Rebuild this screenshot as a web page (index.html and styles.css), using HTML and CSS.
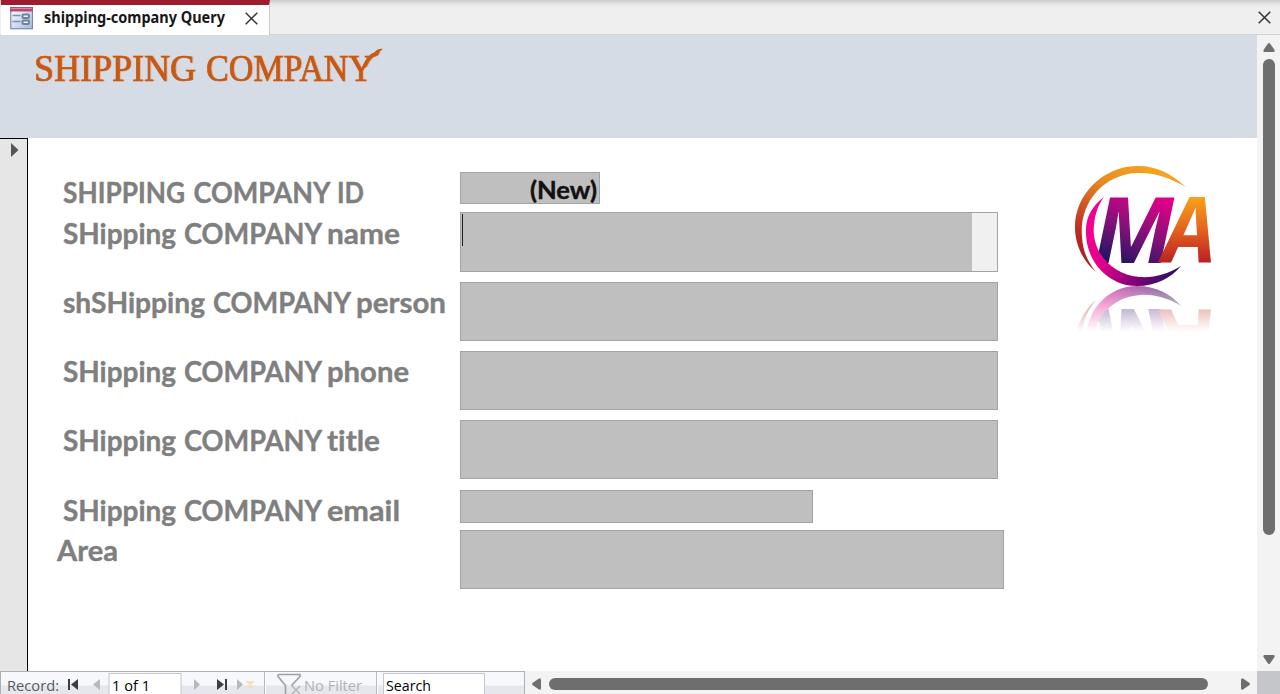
FILE: index.html
```html
<!DOCTYPE html>
<html lang="en">
<head>
<meta charset="utf-8">
<title>shipping-company Query</title>
<link rel="stylesheet" href="styles.css">
</head>
<body>
<div class="window">
  <header class="tabs">
    <div class="tab">
      <svg class="form-icon" width="24" height="23" viewBox="0 0 24 23">
        <defs><linearGradient id="fi" x1="0" y1="0" x2="1" y2="1"><stop offset="0" stop-color="#fff"/><stop offset="1" stop-color="#a5b9e2"/></linearGradient></defs>
        <rect x=".8" y=".8" width="21.600" height="21" fill="url(#fi)" stroke="#6779a8"/>
        <path d="M0 0h23v4.500H0z" fill="#b84a70"/><path d="M1 1.500h21" stroke="#d88aa3"/>
        <path d="M2.500 8.500h8M2.500 14.500h8" stroke="#8290b0" stroke-width="1.500"/>
        <rect x="12.500" y="7.500" width="6.500" height="3.500" rx="1" fill="#eef2fb" stroke="#71809f" stroke-width="2"/>
        <rect x="12.500" y="13.500" width="6.500" height="3.500" rx="1" fill="#eef2fb" stroke="#71809f" stroke-width="2"/>
      </svg>
      <svg class="tab-title" width="184" height="26"><text x="0" y="18" textLength="181" lengthAdjust="spacingAndGlyphs">shipping-company Query</text></svg>
      <svg class="close" width="13" height="13" viewBox="0 0 13 13"><path d="M.7.7l11.600 11.600M12.300.7L.7 12.300"/></svg>
    </div>
    <svg class="close window-close" width="13" height="13" viewBox="0 0 13 13"><path d="M.7.7l11.600 11.600M12.300.7L.7 12.300"/></svg>
  </header>
  <main class="workspace">
    <section class="form">
      <div class="form-header">
        <svg class="heading" width="370" height="70"><text y="46"><tspan x="1" textLength="162" lengthAdjust="spacingAndGlyphs">SHIPPING</tspan> <tspan x="173" textLength="167" lengthAdjust="spacingAndGlyphs">COMPANY</tspan></text><path d="M329 33Q335 19 341 18Q344 14 349 14Q346 16 345 20L340 22Q337 24 333 32z" fill="#c45a16"/></svg>
      </div>
      <div class="form-body">
        <div class="selector"><svg width="8" height="14"><path d="M0 0l7.500 7L0 14z" fill="#555"/></svg></div>
        <div class="fields">
          <div class="row short"><svg class="label" width="432" height="40"><text y="30"><tspan x="35" textLength="122" lengthAdjust="spacingAndGlyphs">SHIPPING</tspan> <tspan x="165.500" textLength="136" lengthAdjust="spacingAndGlyphs">COMPANY</tspan> <tspan x="309" textLength="27" lengthAdjust="spacingAndGlyphs">ID</tspan></text></svg><div class="box id"><svg width="70" height="30"><text x="1" y="26" textLength="67" lengthAdjust="spacingAndGlyphs">(New)</text></svg></div></div>
          <div class="row"><svg class="label" width="432" height="45"><text y="31"><tspan x="35" textLength="113" lengthAdjust="spacingAndGlyphs">SHipping</tspan> <tspan x="156" textLength="137" lengthAdjust="spacingAndGlyphs">COMPANY</tspan> <tspan x="299" textLength="73" lengthAdjust="spacingAndGlyphs">name</tspan></text></svg><div class="box active"><i class="caret"></i><i class="scroll-strip"></i></div></div>
          <div class="row tight"><svg class="label" width="432" height="45"><text y="30"><tspan x="35" textLength="142" lengthAdjust="spacingAndGlyphs">shSHipping</tspan> <tspan x="185" textLength="137" lengthAdjust="spacingAndGlyphs">COMPANY</tspan> <tspan x="328" textLength="90" lengthAdjust="spacingAndGlyphs">person</tspan></text></svg><div class="box"></div></div>
          <div class="row tight"><svg class="label" width="432" height="45"><text y="30"><tspan x="35" textLength="113" lengthAdjust="spacingAndGlyphs">SHipping</tspan> <tspan x="156" textLength="137" lengthAdjust="spacingAndGlyphs">COMPANY</tspan> <tspan x="299" textLength="82" lengthAdjust="spacingAndGlyphs">phone</tspan></text></svg><div class="box"></div></div>
          <div class="row"><svg class="label" width="432" height="45"><text y="30.500"><tspan x="35" textLength="113" lengthAdjust="spacingAndGlyphs">SHipping</tspan> <tspan x="156" textLength="137" lengthAdjust="spacingAndGlyphs">COMPANY</tspan> <tspan x="299" textLength="53" lengthAdjust="spacingAndGlyphs">title</tspan></text></svg><div class="box"></div></div>
          <div class="row short"><svg class="label" width="432" height="40"><text y="30"><tspan x="35" textLength="113" lengthAdjust="spacingAndGlyphs">SHipping</tspan> <tspan x="156" textLength="137" lengthAdjust="spacingAndGlyphs">COMPANY</tspan> <tspan x="299" textLength="73" lengthAdjust="spacingAndGlyphs">email</tspan></text></svg><div class="box email"></div></div>
          <div class="row"><svg class="label" width="432" height="45"><text x="29" y="30.500" textLength="61" lengthAdjust="spacingAndGlyphs">Area</text></svg><div class="box area"></div></div>
        </div>
        <svg class="logo" width="170" height="190" viewBox="0 0 170 190">
          <defs>
            <linearGradient id="gold" x1=".7" y1="0" x2=".15" y2="1"><stop offset="0" stop-color="#f4a51f"/><stop offset=".3" stop-color="#e88b21"/><stop offset=".75" stop-color="#bd2a26"/><stop offset="1" stop-color="#a51d22"/></linearGradient>
            <linearGradient id="pink" x1=".1" y1=".3" x2="1" y2=".9"><stop offset="0" stop-color="#f20092"/><stop offset=".3" stop-color="#e00089"/><stop offset=".65" stop-color="#830079"/><stop offset="1" stop-color="#17165c"/></linearGradient>
            <linearGradient id="mfill" gradientUnits="userSpaceOnUse" x1="92" y1="47" x2="64" y2="116"><stop offset="0" stop-color="#df0087"/><stop offset=".5" stop-color="#851079"/><stop offset="1" stop-color="#201663"/></linearGradient>
            <linearGradient id="afill" gradientUnits="userSpaceOnUse" x1="125" y1="47" x2="125" y2="113"><stop offset="0" stop-color="#f7a31b"/><stop offset=".5" stop-color="#e36220"/><stop offset="1" stop-color="#b91f22"/></linearGradient>
            <linearGradient id="fade" gradientUnits="userSpaceOnUse" x1="0" y1="136" x2="0" y2="182"><stop offset="0" stop-color="#fff" stop-opacity=".6"/><stop offset=".5" stop-color="#fff" stop-opacity=".3"/><stop offset="1" stop-color="#fff" stop-opacity="0"/></linearGradient>
            <mask id="mask" maskUnits="userSpaceOnUse" x="0" y="136" width="170" height="54"><rect y="136" width="170" height="54" fill="url(#fade)"/></mask>
            <g id="mark">
              <path d="M126 37C111 23 94 15 76 16C42 17 15 45 15 77C15 95 23 111 36 122C27 111 23 101 22 87C19 53 43 25 76 23C95 22 110 28 126 37Z" fill="url(#gold)"/>
              <text class="logo-letter" x="34" y="113" textLength="80" lengthAdjust="spacingAndGlyphs" fill="url(#mfill)">M</text>
              <text class="logo-letter" x="103" y="113" textLength="53" lengthAdjust="spacingAndGlyphs" fill="url(#afill)">A</text>
              <path d="M44 47C32 56 25 68 26 84C27 113 49 136 77 136C96 136 111 128 121 116C108 124 94 128 80 127C51 125 31 101 34 75C35 64 38 55 44 47Z" fill="url(#pink)"/>
            </g>
          </defs>
          <use href="#mark"/>
          <g mask="url(#mask)"><use href="#mark" transform="translate(0 272) scale(1 -1)"/></g>
        </svg>
      </div>
    </section>
    <aside class="vscroll">
      <svg width="14" height="11"><path d="M6 1.500Q7 .5 8 1.500L12.500 8Q13 10 11.500 10h-9Q1 10 1.500 8z"/></svg>
      <div class="vthumb"></div>
      <svg width="14" height="11"><path d="M6 9.500Q7 10.500 8 9.500L12.500 3Q13 1 11.500 1h-9Q1 1 1.500 3z"/></svg>
    </aside>
  </main>
  <footer class="bottom">
    <div class="navigator">
      <svg width="523" height="22" viewBox="1 1 523 22">
        <rect x="109" y="2.500" width="72" height="24" fill="#fff" stroke="#c5c8d0"/>
        <rect x="383.500" y="2.500" width="101" height="24" fill="#fff" stroke="#c5c8d0"/>
        <path d="M264.500 0v23M376.500 0v23" stroke="#b5b8c0"/><path d="M265.500 1v22M377.500 1v22" stroke="#fff"/>
        <text x="7" y="20" fill="#555a65" textLength="52" lengthAdjust="spacingAndGlyphs">Record:</text>
        <text x="112" y="20" textLength="38" lengthAdjust="spacingAndGlyphs">1 of 1</text>
        <text x="304" y="20" fill="#b0b2b7" textLength="58" lengthAdjust="spacingAndGlyphs">No Filter</text>
        <text x="386" y="20" textLength="45" lengthAdjust="spacingAndGlyphs">Search</text>
        <path d="M68 8h2v11h-2zM78 8v11l-7-5.500zM217 8v11l7-5.500zM225 8h2v11h-2z" fill="#3c3e43"/>
        <path d="M100 8v11l-7-5.500zM194 8v11l6-5.500zM237 8v11l6-5.500z" fill="#b6b8be"/>
        <path d="M247 10l6 7M253 10l-6 7M246 11h8M246 16h8" stroke="#f1dfbd" stroke-width="1.300"/>
        <path d="M278 3.500h22v2l-8 8.500v1M278 3.500v2l7.500 9V24" fill="none" stroke="#9fa1a6" stroke-width="1.700"/>
        <path d="M292 15l8 8M300 15l-9 9" stroke="#b5b6b9" stroke-width="1.500"/>
      </svg>
    </div>
    <div class="hscroll">
      <svg width="11" height="14"><path d="M1.500 6Q.5 7 1.500 8L8 12.500Q10 13 10 11.500v-9Q10 1 8 1.500z"/></svg>
      <div class="hthumb"></div>
      <svg width="11" height="14"><path d="M9.500 6Q10.500 7 9.500 8L3 12.500Q1 13 1 11.500v-9Q1 1 3 1.500z"/></svg>
    </div>
    <div class="corner"></div>
  </footer>
</div>
</body>
</html>
```

FILE: styles.css
```css
* { box-sizing: border-box; }
body { margin: 0; overflow: hidden; font-family: "Open Sans", sans-serif; }
svg { display: block; flex: none; overflow: visible; }
.window { width: 1280px; height: 694px; display: flex; flex-direction: column; background: #fff; }
.tabs { height: 35px; display: flex; justify-content: space-between; background: linear-gradient(#c9c9c9, #e6e6e6 4px, #efefef 8px); border-bottom: 1px solid #d0d2d4; }
.tab { width: 269px; height: 35px; margin-left: 1px; display: flex; background: #fff; border-top: 5px solid #9d1c2d; border-right: 1px solid #ccc; }
.form-icon { margin: 2px 11px 0 9px; }
.tab-title { font: bold 15.5px "Noto Sans", sans-serif; fill: #171717; margin-left: -1px; }
.close { stroke: #333; stroke-width: 1.5; fill: none; }
.tab .close { margin: 7px 0 0 17px; }
.window-close { margin: 11px 9px 0 0; }
.workspace { height: 636px; display: flex; }
.form { width: 1257px; display: flex; flex-direction: column; }
.form-header { height: 103px; background: #d5dce6; padding-left: 33px; }
.heading { font: 37px "Liberation Serif", serif; fill: #c45a16; stroke: #c45a16; stroke-width: .7px; filter: drop-shadow(1.5px 0 0 #e3b49c); }
.form-body { flex: 1; display: flex; }
.selector { width: 28px; background: #e6e6e6; border-top: 1px solid #000; border-right: 1px solid #000; padding: 4px 0 0 11px; }
.fields { width: 984px; padding-top: 34px; }
.row { height: 70px; display: flex; }
.row.tight { height: 69px; }
.row.short { height: 40px; }
.label { font: bold 28px Lato, sans-serif; font-variant-ligatures: none; fill: #7f7f7f; stroke: #7f7f7f; stroke-width: .4px; transform: translateY(.5px); }
.box { width: 538px; height: 59px; background: #bfbfbf; border: 1px solid #a3a3a3; }
.box.id { width: 140px; height: 32px; display: flex; justify-content: flex-end; }
.box.id svg { font: bold 25px Lato, sans-serif; fill: #111; stroke: #111; stroke-width: .4px; }
.box.active { height: 60px; display: flex; justify-content: space-between; }
.caret { width: 1px; height: 32px; margin: 1px 0 0 1px; background: #222; }
.scroll-strip { width: 25px; background: #f0f0f0; }
.box.email { width: 353px; height: 33px; }
.box.area { width: 544px; }
.logo { margin: 12px 0 0 48px; }
.logo-letter { font: italic bold 91px "Open Sans", sans-serif; }
.vscroll { width: 23px; background: #f3f3f3; display: flex; flex-direction: column; align-items: center; padding: 7px 0 6px 1px; }
.vscroll svg, .hscroll svg { fill: #6e6e6e; }
.vthumb { width: 12px; height: 476px; margin: 6px 0 auto; border-radius: 6px; background: #6e6e6e; }
.bottom { height: 23px; display: flex; }
.navigator { width: 525px; border: solid #aeb0b6; border-width: 1px 1px 0; background: linear-gradient(#f7f8fb 0 13px, #e5e7ec 14px); font-size: 15px; }
.hscroll { width: 732px; background: #f3f3f3; display: flex; align-items: center; padding: 2px 6px 0; }
.hthumb { width: 659px; height: 12px; margin: 0 auto 0 7px; border-radius: 6px; background: #6e6e6e; }
.corner { width: 23px; background: #c5c6c9; }
```
